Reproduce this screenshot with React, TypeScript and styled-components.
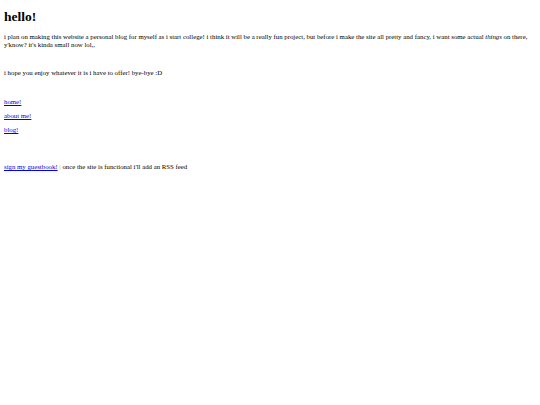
import styled, { createGlobalStyle } from 'styled-components';

const GlobalStyle = createGlobalStyle`
  body {
    margin: 4px;
    background: #ffffff;
    color: #000000;
    font-family: "Liberation Serif", "Times New Roman", serif;
    font-size: 6.8px;
    line-height: 8px;
  }
`;

const Title = styled.h1`
  font-size: 13.5px;
  line-height: 16px;
  font-weight: bold;
  margin: 5px 0 8px;
`;

const Para = styled.p<{ $gap?: number }>`
  margin: 0;
  margin-bottom: ${({ $gap }) => ($gap ? `${$gap}px` : '0')};
`;

const Nav = styled.nav`
  display: flex;
  flex-direction: column;
  align-items: flex-start;
  gap: 6px;
  margin: 21px 0 29px;
`;

const NavLink = styled.a`
  color: #0000ee;
  text-decoration: underline;
`;

const Footer = styled.p`
  margin: 0;
`;

const Link = styled.a`
  color: #0000ee;
  text-decoration: underline;
`;

const Divider = styled.span`
  color: #999999;
`;

export default function App() {
  return (
    <>
      <GlobalStyle />
      <Title>hello!</Title>
      <Para $gap={20}>
        i plan on making this website a personal blog for myself as i start college! i think it will be a really fun
        project, but before i make the site all pretty and fancy, i want some actual <i>things</i> on there, y'know?
        it's kinda small now lol,,
      </Para>
      <Para>i hope you enjoy whatever it is i have to offer! bye-bye :D</Para>
      <Nav>
        <NavLink href="#">home!</NavLink>
        <NavLink href="#">about me!</NavLink>
        <NavLink href="#">blog!</NavLink>
      </Nav>
      <Footer>
        <Link href="#">sign my guestbook!</Link> <Divider>|</Divider> once the site is functional i'll add an RSS feed
      </Footer>
    </>
  );
}
